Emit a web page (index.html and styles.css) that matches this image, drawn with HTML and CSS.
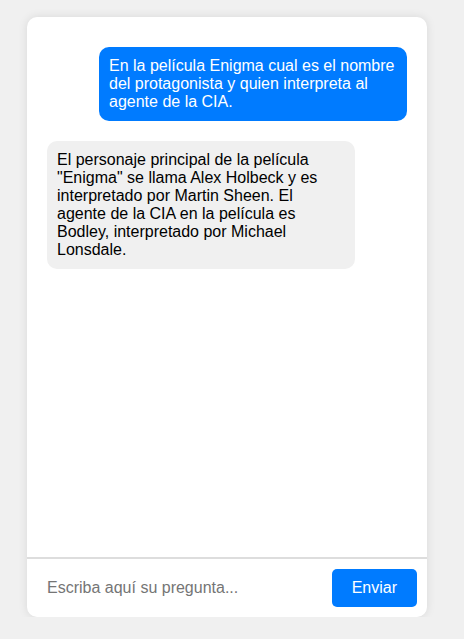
FILE: index.html
```html
<!DOCTYPE html>
<html lang="es">
<head>
<meta charset="utf-8">
<link rel="stylesheet" href="styles.css">
</head>
<body>
<div class="page">
  <div class="chat">
    <div class="messages">
      <div class="msg user">En la película Enigma cual es el nombre del protagonista y quien interpreta al agente de la CIA.</div>
      <div class="msg bot">El personaje principal de la película "Enigma" se llama Alex Holbeck y es interpretado por Martin Sheen. El agente de la CIA en la película es Bodley, interpretado por Michael Lonsdale.</div>
    </div>
    <div class="composer">
      <input class="ask" type="text" placeholder="Escriba aquí su pregunta...">
      <button class="send">Enviar</button>
    </div>
  </div>
</div>
</body>
</html>
```

FILE: styles.css
```css
html, body {
  margin: 0;
  padding: 0;
  background: #f0f0f0;
  font-family: "Liberation Sans", Arial, sans-serif;
  font-size: 16px;
}
.page {
  padding: 17px 0 0 27px;
}
.chat {
  width: 400px;
  height: 600px;
  background: #fff;
  border-radius: 10px;
  box-shadow: 0 0 10px rgba(0, 0, 0, 0.1);
  display: flex;
  flex-direction: column;
  overflow: hidden;
}
.messages {
  flex: 1;
  padding: 20px;
  display: flex;
  flex-direction: column;
}
.msg {
  max-width: 80%;
  padding: 10px;
  margin: 10px 0;
  border-radius: 10px;
  line-height: 18px;
}
.user {
  align-self: flex-end;
  background: #007bff;
  color: #fff;
}
.bot {
  align-self: flex-start;
  background: #f0f0f0;
  color: #000;
}
.composer {
  display: flex;
  gap: 10px;
  padding: 10px;
  border-top: 2px solid #dddddd;
}
.ask {
  flex: 1;
  border: none;
  outline: none;
  padding: 10px;
  font-family: inherit;
  font-size: 16px;
  color: #000;
  background: transparent;
}
.ask::placeholder {
  color: #757575;
}
.send {
  background: #007bff;
  color: #fff;
  border: none;
  border-radius: 5px;
  padding: 10px 20px;
  font-family: inherit;
  font-size: 16px;
}
```
